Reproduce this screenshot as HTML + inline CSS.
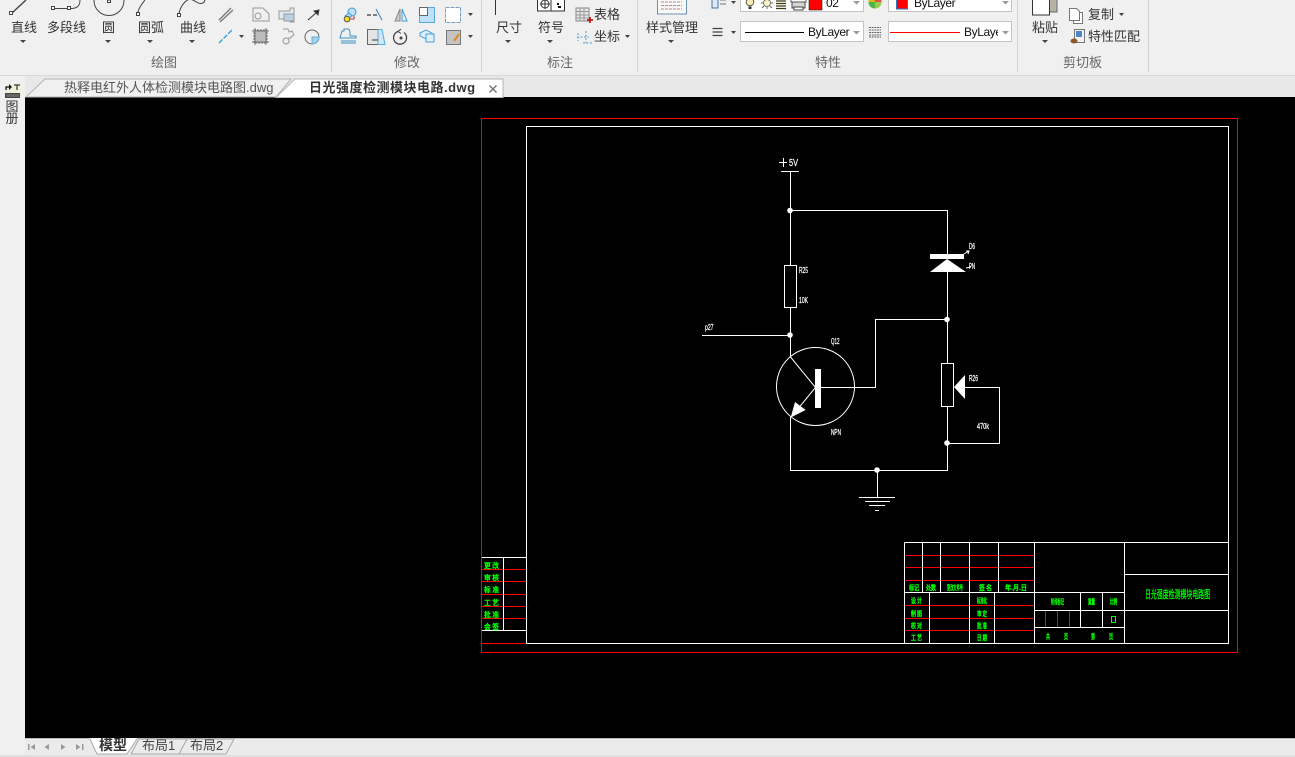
<!DOCTYPE html>
<html lang="zh">
<head>
<meta charset="utf-8">
<title>CAD</title>
<style>
html,body{margin:0;padding:0;width:1295px;height:757px;overflow:hidden;background:#f0f0f0;}
body{position:relative;font-family:"Liberation Sans","Noto Sans CJK SC",sans-serif;color:#3c3c3c;}
.t{position:absolute;font-size:13px;line-height:16px;white-space:nowrap;color:#333;}
.g{position:absolute;font-size:13px;line-height:16px;white-space:nowrap;color:#666;}
.c{position:absolute;background:#fff;border:1px solid #c4c4c4;box-sizing:border-box;overflow:hidden;}
.e{font-size:12px;color:#111;letter-spacing:-.4px;}
svg{position:absolute;left:0;top:0;overflow:hidden;}
#canvas{position:absolute;left:25px;top:97px;width:1270px;height:641px;background:#000;}
</style>
</head>
<body>
<!-- strip backgrounds -->
<div style="position:absolute;left:0;top:75px;width:1295px;height:1px;background:#d8d8d8"></div>
<div style="position:absolute;left:25px;top:76px;width:1270px;height:21px;background:#e8e8e8"></div>
<div style="position:absolute;left:0;top:755px;width:1295px;height:2px;background:#e0e0e0"></div>

<div id="canvas"></div>

<!-- ribbon separators -->
<div style="position:absolute;left:331px;top:0;width:1px;height:72px;background:#d2d2d2"></div>
<div style="position:absolute;left:481px;top:0;width:1px;height:72px;background:#d2d2d2"></div>
<div style="position:absolute;left:637px;top:0;width:1px;height:72px;background:#d2d2d2"></div>
<div style="position:absolute;left:1017px;top:0;width:1px;height:72px;background:#d2d2d2"></div>
<div style="position:absolute;left:1148px;top:0;width:1px;height:72px;background:#d2d2d2"></div>

<!-- ribbon labels -->
<div class="t" style="left:11px;top:20px">直线</div>
<div class="t" style="left:47px;top:20px">多段线</div>
<div class="t" style="left:102px;top:20px">圆</div>
<div class="t" style="left:138px;top:20px">圆弧</div>
<div class="t" style="left:180px;top:20px">曲线</div>
<div class="t" style="left:496px;top:20px">尺寸</div>
<div class="t" style="left:538px;top:20px">符号</div>
<div class="t" style="left:594px;top:7px">表格</div>
<div class="t" style="left:594px;top:29px">坐标</div>
<div class="t" style="left:646px;top:20px">样式管理</div>
<div class="t" style="left:1032px;top:20px">粘贴</div>
<div class="t" style="left:1088px;top:7px">复制</div>
<div class="t" style="left:1088px;top:29px">特性匹配</div>
<div class="g" style="left:151px;top:55px">绘图</div>
<div class="g" style="left:394px;top:55px">修改</div>
<div class="g" style="left:547px;top:55px">标注</div>
<div class="g" style="left:815px;top:55px">特性</div>
<div class="g" style="left:1063px;top:55px">剪切板</div>

<!-- property combos -->
<div class="c" style="left:740px;top:-4px;width:124px;height:16px"></div>
<div class="c" style="left:888px;top:-4px;width:124px;height:16px"></div>
<div class="c" style="left:740px;top:21px;width:124px;height:21px"></div>
<div class="c" style="left:888px;top:21px;width:124px;height:21px"></div>
<div class="t e" style="left:826px;top:-5px">02</div>
<div class="t e" style="left:914px;top:-5px">ByLayer</div>
<div class="t e" style="left:808px;top:24px">ByLayer</div>
<div class="t e" style="left:964px;top:24px;width:34px;overflow:hidden">ByLayer</div>

<!-- document tabs -->
<svg width="1295" height="757" viewBox="0 0 1295 757">
<polygon points="26,97 45,79 291,79 276,97" fill="#f0f0f0" stroke="#b4b4b4"/>
<polygon points="276,97.500 295,79 503,79 503,97.500" fill="#fff" stroke="#b4b4b4"/>
<path d="M489.500,85.500l7,7M496.500,85.500l-7,7" stroke="#777" stroke-width="1.500"/>
</svg>
<div class="t" style="left:64px;top:80px;color:#555">热释电红外人体检测模块电路图.dwg</div>
<div class="t" style="left:309px;top:80px;color:#333;font-weight:bold;letter-spacing:.5px">日光强度检测模块电路.dwg</div>

<!-- ribbon icons -->
<svg width="1295" height="100" viewBox="0 0 1295 100" fill="none">
<g stroke="#444" stroke-width="1">
<path d="M12,13L26,0" stroke-width="1.400"/><rect x="9.500" y="11.500" width="3" height="3" fill="#fff"/>
<path d="M55,8.500H67M71,8.500C78,8.500 80,5 80,0" /><rect x="51.500" y="6.500" width="3" height="3" fill="#fff"/><rect x="67.500" y="6.500" width="3" height="3" fill="#fff"/>
<circle cx="109" cy="0.500" r="15"/><rect x="107.500" y="0" width="3" height="2.500"/>
<path d="M138,12C139,7 142,4 145,0"/><rect x="136.500" y="12.500" width="3" height="3" fill="#fff"/>
<path d="M179,13C181,5 186,0 190,-1C195,0 198,5 203,3C205,2 205,0 205,-1"/><rect x="177.500" y="13.500" width="3" height="3" fill="#fff"/>
<path d="M219,20L231,8M220,22L233,10" stroke="#777" stroke-width="1.300"/>
<path d="M219,43L232,30" stroke="#2a9ad8" stroke-width="1.300" stroke-dasharray="5 1.500"/>
<path d="M253,8h10l6,6v7h-16z" stroke="#999"/><circle cx="258" cy="16" r="3" stroke="#999"/>
<path d="M279,11h11v-3h4v14h-4v-3h-11z" stroke="#9a9a9a" fill="#dfe9f3"/><rect x="284" y="14" width="10" height="7" fill="#b9cfe4" stroke="#9a9a9a"/>
<path d="M308,20L316,13" stroke="#333"/>
<path d="M314,11l5,-1l-1,5z" fill="#222"/>
<rect x="254" y="30" width="13" height="13" fill="#bcbcbc" stroke="#777" stroke-dasharray="2 1"/>
<path d="M252,31H269M252,42H269M255,28V45M266,28V45" stroke="#777"/>
<path d="M283,29h5l1,3 3,-1 2,4 -3,2 v1h-3M286,38a3,3 0 1,0 0.100,0" stroke="#9a9a9a"/>
<circle cx="312" cy="37" r="7" stroke="#666"/><path d="M312,37V44A7,7 0 0,0 319,37Z" fill="#9fd3f0" stroke="#6aaad0"/>
<circle cx="352" cy="12" r="4" fill="#bfe0f7" stroke="#3e9ad6"/><path d="M345,16l4,-3 3,3 -4,3z" fill="#bfe0f7" stroke="#3e9ad6"/>
<circle cx="347" cy="19" r="2.800" fill="#f5e017" stroke="#555"/><path d="M350,19h4v-2h1" stroke="#c0392b"/>
<path d="M367,15h4M373,15h4" stroke="#555" stroke-width="1.500"/><path d="M376,9l6,11" stroke="#2a82c4"/>
<path d="M400,9v12h-5z" stroke="#888" fill="#ccc"/><path d="M402,9v12h5z" stroke="#3e9ad6" fill="#e6f3fb"/>
<rect x="419.500" y="7.500" width="15" height="15" fill="#bfe0f7" stroke="#5aaada"/><rect x="419.500" y="7.500" width="8" height="8" fill="#fff" stroke="#666"/>
<rect x="445.500" y="7.500" width="15" height="15" fill="#fff" stroke="#7a9fc0" stroke-dasharray="4 1"/>
<path d="M342,31h2v-2h4c2,0 2,3 2,5v2h6v2h-16z" stroke="#3e8fc6"/><path d="M341,41H356M341,43H356" stroke="#3e8fc6"/>
<rect x="367.500" y="29.500" width="11" height="15" fill="#e4e4e4" stroke="#666"/><path d="M378,29.500h4l3,15h-7z" fill="#cfe6f7" stroke="#5aaada"/><path d="M372,40h6" stroke="#333"/>
<path d="M398,31.500a6.500,6.500 0 1,0 6,1" stroke="#444" stroke-width="1.300"/><circle cx="401" cy="38" r="1" fill="#444"/><path d="M401,29l-3,2.500 3,2" stroke="#444"/>
<path d="M420,33l6,-3 6,3v3l-6,3-6,-3z" stroke="#4aa0d8" fill="#dff0fb"/><rect x="426" y="34" width="8" height="8" stroke="#4aa0d8" fill="#dff0fb"/>
<rect x="446.500" y="30.500" width="14" height="14" fill="#c4c4c4" stroke="#777"/><path d="M454,41l5,-7" stroke="#e08a1e" stroke-width="2"/>
</g>
<g fill="#444">
<path d="M20,40h6l-3,3zM147,40h6l-3,3zM105,40h6l-3,3zM189,40h6l-3,3zM239,35h5l-2.500,3zM468,13h5l-2.500,3zM468,35h5l-2.500,3zM505,40h6l-3,3zM547,40h6l-3,3zM668,40h6l-3,3zM625,35h5l-2.500,3zM1042,40h6l-3,3zM1119,13h5l-2.500,3zM731,31h5l-2.500,3zM731,1h5l-2.500,3z"/>
<path d="M853,31h7l-3.500,3.500zM1002,31h7l-3.500,3.500zM853,1h7l-3.500,3.500zM1002,1h7l-3.500,3.500z" fill="#999"/>
</g>
<path d="M495.500,0V15" stroke="#333"/>
<rect x="537.500" y="-2" width="27" height="13" fill="#fff" stroke="#333"/><path d="M551,-2V11" stroke="#333"/><circle cx="545" cy="4" r="4" stroke="#333" fill="none"/><path d="M540,4H550M545,-1V9" stroke="#333"/><path d="M557,4h2M558,7h3" stroke="#111" stroke-width="2"/>
<rect x="576" y="8" width="13" height="13" fill="#e6e6e6" stroke="#888"/><path d="M576,11.500h13M576,15h13M576,18h13M580,8v13M584,8v13" stroke="#999"/><path d="M587,20h6M590,17v6" stroke="#c00" stroke-width="1.500"/>
<path d="M578,33v8M586,31v12M577,37h12M583,43h9" stroke="#5a9cc8" stroke-dasharray="2 1.500" fill="none"/>
<rect x="657.500" y="-3" width="29" height="17" fill="#f8f8f8" stroke="#6d92b0"/><path d="M661,2h21M661,5.500h21M661,9h21" stroke="#b88" stroke-dasharray="3 1"/>
<rect x="712" y="-2" width="6" height="10" fill="#dfe9f3" stroke="#3e78a8"/><path d="M720,0h6M720,4h6" stroke="#777"/>
<path d="M712.500,28.500h10M712.500,32h10M712.500,35.500h10" stroke="#444" stroke-width="1.200" fill="none"/>
<circle cx="750" cy="2" r="3.800" fill="#f7ecb0" stroke="#555"/><path d="M748.500,6.500h3v2.500h-3z" fill="#333"/>
<circle cx="767" cy="3" r="3.500" fill="#fff6c8" stroke="#777"/><path d="M761,3h2M771,3h2M767,9v-2M762,8l2,-2M772,8l-2,-2" stroke="#666" fill="none"/>
<path d="M776,1h10M776,3.500h10M776,6h10M776,8.500h10" stroke="#3a3a10" stroke-width="1.200" fill="none"/>
<rect x="792" y="0" width="13" height="8" fill="#d6d6d6" stroke="#444"/><rect x="794" y="7" width="9" height="3" fill="#fff" stroke="#444"/><rect x="791" y="-1" width="15" height="3" fill="#fff" stroke="#555"/>
<rect x="809" y="-2" width="13" height="12" fill="#f00" stroke="#222" stroke-width=".6"/>
<circle cx="875" cy="2" r="6.500" fill="#e4b21c"/>
<path d="M875,2L868.500,2A6.500,6.500 0 0,0 875,8.500Z" fill="#49b649"/>
<path d="M875,2L881.500,2A6.500,6.500 0 0,0 875,-4.500Z" fill="#e0504a"/>
<path d="M875,2L875,8.500A6.500,6.500 0 0,0 881.500,2Z" fill="#9bc94a"/>
<rect x="896.500" y="-2" width="11" height="11" fill="#f00" stroke="#2b74c4"/>
<path d="M745,32.500H804" stroke="#000"/>
<path d="M890,32.500H960" stroke="#f00"/>
<path d="M869,27.500h12M869,30h12M869,32.500h12M869,35h12M869,37h12" stroke="#666" stroke-dasharray="2 .7" fill="none"/>
<rect x="1046" y="-3" width="11" height="15" fill="#b8b2a6" stroke="#666"/><rect x="1032.500" y="-4" width="17" height="19" fill="#fff" stroke="#333"/>
<rect x="1073.500" y="12.500" width="9" height="11" fill="#fff" stroke="#777"/><path d="M1069.500,8.500h7l3,3v9h-10z" fill="#fff" stroke="#777"/>
<rect x="1074.500" y="29.500" width="10" height="13" fill="#f2f2f2" stroke="#777"/><rect x="1076" y="31" width="6" height="6" fill="#4a86c8"/><ellipse cx="1074" cy="41" rx="3.500" ry="2.500" fill="#8a5a2b"/>
</svg>

<!-- left side panel -->
<svg width="25" height="130" viewBox="0 0 25 130" fill="none">
<rect x="5" y="84" width="16" height="14" fill="#f0f0dc"/>
<path d="M6,90V87H10" stroke="#111" stroke-width="1.300"/><path d="M9,84l3,3-3,3z" fill="#111"/>
<path d="M14,85h6M17,85v5" stroke="#555" stroke-width="1.500"/>
<rect x="5.500" y="93.500" width="14" height="4" fill="#666" stroke="#444"/>
</svg>
<div style="position:absolute;left:4px;top:101px;width:16px;font-size:13px;line-height:12px;color:#333;text-align:center">图<br>册</div>

<!-- drawing -->
<svg width="1295" height="757" viewBox="0 0 1295 757" fill="none" shape-rendering="crispEdges">
<path d="M481.500,118.500V652.500H1237.500V118.500Z" stroke="#f00" transform="translate(0,0)"/>
<path d="M482,643.500H527" stroke="#f00"/>
<rect x="526.500" y="126.500" width="702" height="517" stroke="#fff"/>

<!-- left small table -->
<g stroke="#f00"><path d="M482,569.500H526M482,581.500H526M482,594.500H526M482,606.500H526M482,618.500H526"/></g>
<g stroke="#fff"><path d="M482,557.500H526M482,630.500H526M503.500,557.500V630.500"/></g>

<!-- title block -->
<g stroke="#f00">
<path d="M905,555.500H1034M905,567.500H1034M905,580.500H1034"/>
<path d="M905,605.500H1034M905,618.500H1034M905,630.500H1034"/>
<path d="M1045.500,610V627M1057.500,610V627M1069.500,610V627"/>
</g>
<g stroke="#fff">
<path d="M904.500,542.500H1228M904.500,542.500V643M922.500,542.500V592M940.500,542.500V592M969.500,542.500V643M998.500,542.500V592M1034.500,542.500V643M1124.500,542.500V643"/>
<path d="M904.500,592.500H1124M929.500,592.500V643M994.500,592.500V643"/>
<path d="M1034,610.500H1124M1034,627.500H1124M1080.500,592.500V627M1102.500,592.500V627"/>
<path d="M1124,574.500H1228M1124,610.500H1228"/>
</g>
<rect x="1111.500" y="616.500" width="4" height="6" stroke="#0f0"/>

<!-- circuit -->
<g stroke="#fff">
<path d="M779,162.500H787M783.500,158V167M781,171.500H799"/>
<path d="M790.500,171V265M790.500,308V357"/>
<path d="M790,210.500H947.500V254"/>
<rect x="784.500" y="265.500" width="12" height="42"/>
<path d="M702,335.500H790"/>
<path d="M947.500,272V363M947.500,407V470.500H790.500V417"/>
<path d="M947,319.500H875.500V387.500H821"/>
<rect x="941.500" y="363.500" width="12" height="43"/>
<path d="M965,387.500H999.500V443.500H947"/>
<path d="M877.500,470V497M859,497.500H895M865,501.500H890M869,505.500H885M875,510.500H879"/>
</g>
<g fill="#fff">
<rect x="930" y="254" width="34" height="5"/>
<rect x="815" y="369" width="6" height="39"/>
</g>
<g shape-rendering="auto">
<g fill="#fff">
<circle cx="790" cy="210.500" r="2.800"/><circle cx="790" cy="335" r="2.800"/><circle cx="947" cy="319.500" r="2.800"/><circle cx="947" cy="443" r="2.800"/><circle cx="877" cy="470" r="2.800"/>
<polygon points="947,259 930,272 966,272"/>
<polygon points="790.700,417.500 795,402 805.700,410"/>
<polygon points="954,387 965,375 965,399"/>
</g>
<circle cx="815.500" cy="386.500" r="39" stroke="#fff"/>
<path d="M790.500,357L815.500,387.500L792,416" stroke="#fff"/>
<path d="M964,254L969,251M966,251l3,0 -1,3M966,268l5,-1" stroke="#fff"/>
<g fill="#fff" stroke="#fff" stroke-width=".25" font-family="'Liberation Sans',sans-serif" font-size="8">
<text x="789" y="166" font-size="10" textLength="9" lengthAdjust="spacingAndGlyphs">5V</text>
<text x="799" y="273" textLength="9" lengthAdjust="spacingAndGlyphs">R25</text>
<text x="799" y="303" textLength="9" lengthAdjust="spacingAndGlyphs">10K</text>
<text x="705" y="330" textLength="8.500" lengthAdjust="spacingAndGlyphs">p27</text>
<text x="831" y="344" textLength="8.500" lengthAdjust="spacingAndGlyphs">Q12</text>
<text x="831" y="435" textLength="10" lengthAdjust="spacingAndGlyphs">NPN</text>
<text x="969" y="249" textLength="6" lengthAdjust="spacingAndGlyphs">D6</text>
<text x="969" y="269" textLength="6" lengthAdjust="spacingAndGlyphs">PN</text>
<text x="969" y="381" textLength="9" lengthAdjust="spacingAndGlyphs">R26</text>
<text x="977" y="429" textLength="12" lengthAdjust="spacingAndGlyphs">470k</text>
</g>
<g fill="#0f0" stroke="#0f0" stroke-width=".45" font-family="'Noto Sans CJK SC',sans-serif" font-size="7">
<text x="484" y="568" textLength="15" lengthAdjust="spacingAndGlyphs">更 改</text>
<text x="484" y="580" textLength="15" lengthAdjust="spacingAndGlyphs">审 核</text>
<text x="484" y="592" textLength="15" lengthAdjust="spacingAndGlyphs">标 准</text>
<text x="484" y="605" textLength="15" lengthAdjust="spacingAndGlyphs">工 艺</text>
<text x="484" y="617" textLength="15" lengthAdjust="spacingAndGlyphs">批 准</text>
<text x="484" y="629" textLength="15" lengthAdjust="spacingAndGlyphs">会 签</text>
<text x="909" y="590" textLength="10" lengthAdjust="spacingAndGlyphs">标记</text>
<text x="926" y="590" textLength="10" lengthAdjust="spacingAndGlyphs">处数</text>
<text x="947" y="590" textLength="16" lengthAdjust="spacingAndGlyphs">更改文件号</text>
<text x="979" y="590" textLength="13" lengthAdjust="spacingAndGlyphs">签 名</text>
<text x="1005" y="590" textLength="22" lengthAdjust="spacingAndGlyphs">年.月.日</text>
<text x="911" y="603" textLength="11" lengthAdjust="spacingAndGlyphs">设 计</text>
<text x="911" y="616" textLength="11" lengthAdjust="spacingAndGlyphs">制 图</text>
<text x="911" y="628" textLength="11" lengthAdjust="spacingAndGlyphs">校 对</text>
<text x="911" y="640" textLength="11" lengthAdjust="spacingAndGlyphs">工 艺</text>
<text x="977" y="603" textLength="10" lengthAdjust="spacingAndGlyphs">标准化</text>
<text x="977" y="616" textLength="10" lengthAdjust="spacingAndGlyphs">审 定</text>
<text x="977" y="628" textLength="10" lengthAdjust="spacingAndGlyphs">批 准</text>
<text x="977" y="640" textLength="10" lengthAdjust="spacingAndGlyphs">日 期</text>
<text x="1051" y="604" textLength="13" lengthAdjust="spacingAndGlyphs">阶段标记</text>
<text x="1088" y="604" textLength="7" lengthAdjust="spacingAndGlyphs">重量</text>
<text x="1110" y="604" textLength="7" lengthAdjust="spacingAndGlyphs">比例</text>
<text x="1046" y="639" textLength="4" lengthAdjust="spacingAndGlyphs">共</text>
<text x="1064" y="639" textLength="4" lengthAdjust="spacingAndGlyphs">页</text>
<text x="1091" y="639" textLength="4" lengthAdjust="spacingAndGlyphs">第</text>
<text x="1109" y="639" textLength="4" lengthAdjust="spacingAndGlyphs">页</text>
<text x="1145" y="598" font-size="11" stroke-width=".3" textLength="65" lengthAdjust="spacingAndGlyphs">日光强度检测模块电路图</text>
</g>
</g>
</svg>

<!-- bottom tab bar -->
<svg width="1295" height="757" viewBox="0 0 1295 757" fill="none">
<rect x="25" y="738" width="1270" height="17" fill="#ebebeb"/>
<path d="M25,738.500H1295" stroke="#bdbdbd"/>
<polygon points="90,738 97,754 127,754 137,738" fill="#fff"/>
<path d="M90,739L97,754H127L137,739M131,754L139,739H186M179,754L187,739H234L226,754H131" stroke="#a8a8a8"/>
<g fill="#999">
<path d="M28,744h1.500v6H28zM35,744v6l-4.500,-3zM49,744v6l-4.500,-3zM61,744v6l4.500,-3zM76,744v6l4.500,-3zM82,744h1.500v6H82z"/>
</g>
</svg>
<div class="t" style="left:99px;top:737px;font-weight:bold;font-size:14px;color:#333">模型</div>
<div class="t" style="left:142px;top:738px;color:#444">布局1</div>
<div class="t" style="left:190px;top:738px;color:#444">布局2</div>
</body>
</html>
